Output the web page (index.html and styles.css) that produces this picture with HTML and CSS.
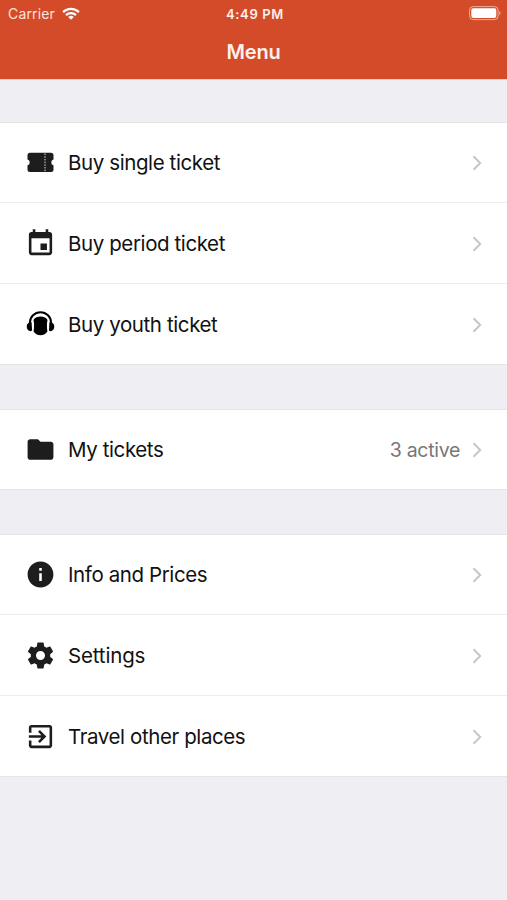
FILE: index.html
```html
<!DOCTYPE html>
<html lang="en">
<head>
<meta charset="utf-8">
<title>Menu</title>
<link rel="stylesheet" href="styles.css">
</head>
<body>
<header class="header">
  <div class="status">
    <div class="carrier"><span>Carrier</span>
      <svg class="wifi" viewBox="0 0 18 13"><g fill="none" stroke="#fff" stroke-width="2.2"><path d="M1.1 5.1a11.2 11.2 0 0 1 15.8 0"/><path d="M4 8.1a7.1 7.1 0 0 1 10 0"/></g><path fill="#fff" d="M9 12.8 6.2 10a4 4 0 0 1 5.600 0z"/></svg>
    </div>
    <div class="time">4:49 PM</div>
    <svg class="battery" viewBox="0 0 33 15"><rect x=".6" y=".6" width="28.500" height="13" rx="3.600" fill="none" stroke="#fff" stroke-opacity=".55" stroke-width="1"/><rect x="2.300" y="2.300" width="25" height="9.600" rx="1.800" fill="#fff"/><path d="M30.300 5v4.300c1.700-.7 1.700-3.600 0-4.300z" fill="#fff" fill-opacity=".55"/></svg>
  </div>
  <h1 class="title">Menu</h1>
</header>
<main class="menu">
  <section class="group">
    <a class="row">
      <svg class="icon" viewBox="0 0 31 31"><path d="M5 5.700h21a2.500 2.500 0 0 1 2.500 2.500v4.300a3 3 0 0 0 0 5.800v4.300a2.500 2.500 0 0 1-2.500 2.500H5a2.500 2.500 0 0 1-2.500-2.500v-4.300a3 3 0 0 0 0-5.800V8.200A2.500 2.500 0 0 1 5 5.700z"/><path d="M20 6.500v18" stroke="#ddd" stroke-width="1" stroke-dasharray="1.500 1.200"/></svg>
      <span class="label">Buy single ticket</span>
      <svg class="chevron" viewBox="0 0 10 16"><path d="m1.500 1.200 6.700 6.800-6.700 6.800"/></svg>
    </a>
    <a class="row">
      <svg class="icon" viewBox="0 0 24 24"><path d="M17 12h-5v5h5v-5zM16 1v2H8V1H6v2H5c-1.110 0-1.990.9-1.990 2L3 19c0 1.100.89 2 2 2h14c1.100 0 2-.9 2-2V5c0-1.100-.9-2-2-2h-1V1h-2zm3 18H5V8h14v11z"/></svg>
      <span class="label">Buy period ticket</span>
      <svg class="chevron" viewBox="0 0 10 16"><path d="m1.500 1.200 6.700 6.800-6.700 6.800"/></svg>
    </a>
    <a class="row">
      <svg class="icon youth" viewBox="0 .8 31 31"><path d="M4.900 16v-1.400a10.600 10.600 0 0 1 21.200 0V16" fill="none" stroke="#000" stroke-width="2"/><path d="M6.600 14c-3-.2-4.900 1.600-4.900 4.300s1.800 4.900 4 4.700c1-.2 1.300-.7 1.300-1.700zM24.400 14c3-.2 4.900 1.600 4.900 4.300s-1.800 4.900-4 4.700c-1-.2-1.300-.7-1.300-1.700z"/><path d="M15.500 8.300c3 0 5.200.9 6.600 2.700.5.700.5 1.300.2 2.100-.5 1.800-.5 6.800 0 8.900.2.900.1 1.400-.5 2.100-1.400 2-3.600 2.900-6.300 2.900s-4.900-.9-6.300-2.900c-.6-.7-.7-1.200-.5-2.100.5-2.100.5-7.100 0-8.900-.3-.8-.3-1.400.2-2.100 1.400-1.800 3.600-2.700 6.600-2.700z"/></svg>
      <span class="label">Buy youth ticket</span>
      <svg class="chevron" viewBox="0 0 10 16"><path d="m1.500 1.200 6.700 6.800-6.700 6.800"/></svg>
    </a>
  </section>
  <section class="group">
    <a class="row">
      <svg class="icon" viewBox="0 0 24 24"><path d="M10 4H4c-1.100 0-1.990.9-1.990 2L2 18c0 1.100.9 2 2 2h16c1.100 0 2-.9 2-2V8c0-1.100-.9-2-2-2h-8l-2-2z"/></svg>
      <span class="label">My tickets</span>
      <span class="value">3 active</span>
      <svg class="chevron" viewBox="0 0 10 16"><path d="m1.500 1.200 6.700 6.800-6.700 6.800"/></svg>
    </a>
  </section>
  <section class="group">
    <a class="row">
      <svg class="icon" viewBox="0 0 24 24"><path d="M12 2C6.480 2 2 6.480 2 12s4.480 10 10 10 10-4.480 10-10S17.520 2 12 2zm1 15h-2v-6h2v6zm0-8h-2V7h2v2z"/></svg>
      <span class="label">Info and Prices</span>
      <svg class="chevron" viewBox="0 0 10 16"><path d="m1.500 1.200 6.700 6.800-6.700 6.800"/></svg>
    </a>
    <a class="row">
      <svg class="icon" viewBox="0 0 24 24"><path d="M19.430 12.980c.04-.32.07-.64.07-.98s-.03-.66-.07-.98l2.110-1.650c.19-.15.24-.42.12-.64l-2-3.460c-.12-.22-.39-.3-.61-.22l-2.490 1c-.52-.4-1.080-.73-1.690-.98l-.38-2.650C14.460 2.180 14.250 2 14 2h-4c-.25 0-.46.18-.49.42l-.38 2.650c-.61.25-1.170.59-1.690.98l-2.490-1c-.23-.09-.49 0-.61.22l-2 3.460c-.13.22-.07.49.12.64l2.110 1.650c-.04.32-.07.65-.07.98s.03.66.07.98l-2.110 1.650c-.19.15-.24.42-.12.64l2 3.460c.12.22.39.3.61.22l2.490-1c.52.4 1.080.73 1.690.98l.38 2.650c.03.24.24.42.49.42h4c.25 0 .46-.18.49-.42l.38-2.650c.61-.25 1.170-.59 1.690-.98l2.490 1c.23.09.49 0 .61-.22l2-3.460c.12-.22.07-.49-.12-.64l-2.110-1.650zM12 15.500c-1.930 0-3.500-1.570-3.500-3.500s1.570-3.500 3.500-3.500 3.500 1.570 3.500 3.500-1.570 3.500-3.500 3.500z"/></svg>
      <span class="label settings">Settings</span>
      <svg class="chevron" viewBox="0 0 10 16"><path d="m1.500 1.200 6.700 6.800-6.700 6.800"/></svg>
    </a>
    <a class="row">
      <svg class="icon" viewBox="0 0 24 24"><path d="M10.090 15.590 11.500 17l5-5-5-5-1.410 1.410L12.670 11H3v2h9.670l-2.580 2.590zM19 3H5c-1.110 0-2 .9-2 2v4h2V5h14v14H5v-4H3v4c0 1.100.89 2 2 2h14c1.100 0 2-.9 2-2V5c0-1.100-.9-2-2-2z"/></svg>
      <span class="label">Travel other places</span>
      <svg class="chevron" viewBox="0 0 10 16"><path d="m1.500 1.200 6.700 6.800-6.700 6.800"/></svg>
    </a>
  </section>
</main>
</body>
</html>
```
FILE: styles.css
```css
* { box-sizing: border-box; }
body {
  margin: 0;
  min-height: 900px;
  background: #eeeef3;
  color: #111;
  font-family: Inter, "Liberation Sans", sans-serif;
}
.header {
  height: 80px;
  background: #d34b29;
  border-bottom: 1px solid #f3c9c0;
  color: #fff;
}
.status {
  display: grid;
  grid-template-columns: 1fr auto 1fr;
  align-items: center;
  height: 27px;
  padding: 0 5px 0 8px;
  font-size: 14px;
}
.carrier { display: flex; align-items: center; gap: 7px; color: #fbe3dc; letter-spacing: .15px; }
.wifi { width: 18px; height: 13px; }
.time { font-size: 13px; font-weight: 600; letter-spacing: .65px; color: #fff0ec; }
.battery { width: 33px; height: 15px; justify-self: end; }
.title {
  margin: 0;
  text-align: center;
  font-size: 20px;
  line-height: 51px;
  font-weight: 600;
  letter-spacing: -.2px;
  color: #fff0ec;
}
.menu { display: flex; flex-direction: column; gap: 44px; padding-top: 42px; }
.group { background: #fff; border-top: 1px solid #e5e5e8; }
.row {
  display: flex;
  align-items: center;
  height: 81px;
  padding: 0 25px;
  border-bottom: 1px solid #ececee;
}
.row:first-child { height: 80px; }
.row:last-child { border-bottom-color: #e5e5e8; }
.icon { width: 31px; height: 31px; margin-right: 12px; fill: #1d1d1d; }
.youth { fill: #000; }
.label { flex: 1; font-size: 20.500px; line-height: 24px; letter-spacing: -.4px; }
.settings { letter-spacing: -.15px; }
.row:not(:first-child) .label,
.row:not(:first-child) .chevron { margin-top: 2px; }
.value { margin-right: 12px; font-size: 19.500px; letter-spacing: -.3px; color: #777; }
.chevron { width: 10px; height: 16px; fill: none; stroke: #c7c7cb; stroke-width: 2; }
```
